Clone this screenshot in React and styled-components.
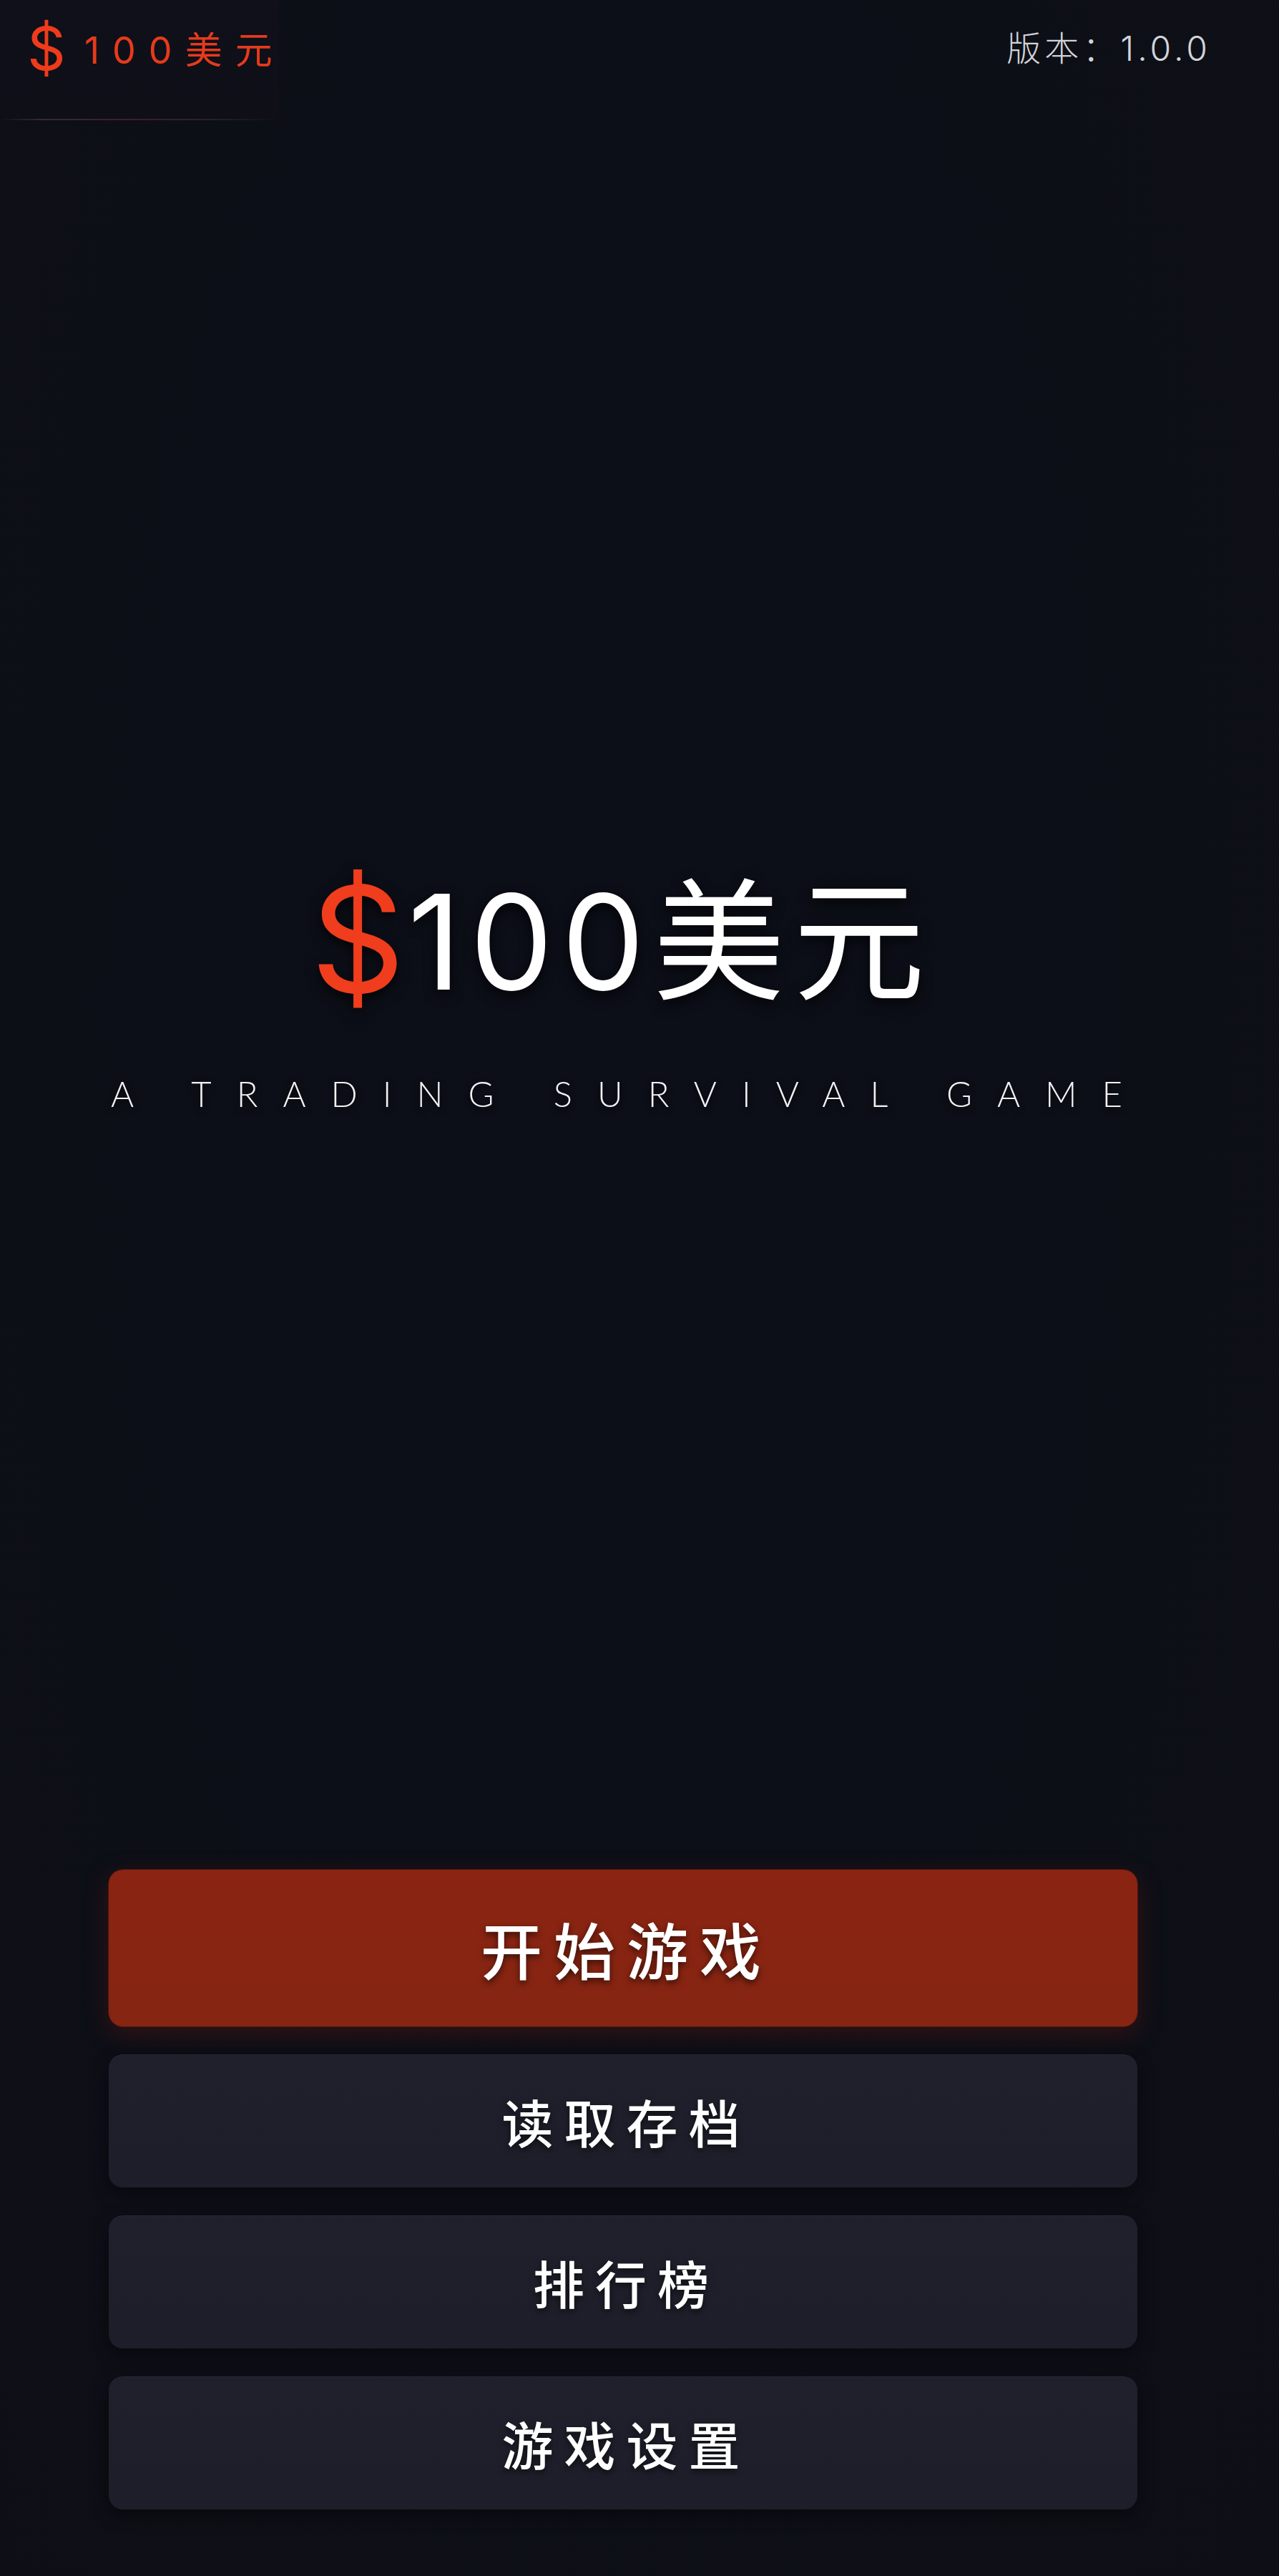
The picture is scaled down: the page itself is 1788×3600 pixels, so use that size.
import styled, { createGlobalStyle } from "styled-components";

const GlobalStyle = createGlobalStyle`
  html, body {
    margin: 0;
    padding: 0;
    background: #0d0f17;
  }
  body {
    font-family: Inter, "Noto Sans CJK SC", sans-serif;
  }
`;

const Screen = styled.div`
  width: 1788px;
  min-height: 3600px;
  display: flex;
  flex-direction: column;
  background: radial-gradient(ellipse at 48% 40%, #0c0e18 0%, #0d0f17 60%, #0e0f16 100%);
  color: #fff;
`;

// top bar
const TopBar = styled.header`
  height: 168px;
  display: flex;
  justify-content: space-between;
  align-items: flex-start;
`;

const LogoBox = styled.div`
  position: relative;
  flex-shrink: 0;
  width: 390px;
  height: 168px;
  display: flex;
  align-items: center;
  padding-left: 38px;
  padding-bottom: 26px;
  box-sizing: border-box;
  white-space: nowrap;
  background: linear-gradient(180deg, #0f1019 0%, #0e0f17 100%);

  &::after {
    content: "";
    position: absolute;
    left: 0;
    right: 0;
    bottom: 0;
    height: 2px;
    background: linear-gradient(
      90deg,
      rgba(255, 255, 255, 0) 0%,
      rgba(90, 70, 80, 0.5) 15%,
      rgba(110, 40, 60, 0.55) 45%,
      rgba(90, 70, 80, 0.35) 75%,
      rgba(255, 255, 255, 0) 100%
    );
  }
`;

const LogoDollar = styled.span`
  font-family: Inter, sans-serif;
  font-weight: 400;
  font-size: 84px;
  line-height: 1;
  color: #ee3b1b;
  margin-right: 26px;
  transform: translateY(-3px);
`;

const LogoText = styled.span`
  font-family: Inter, "Noto Sans CJK SC", sans-serif;
  font-size: 52px;
  font-weight: 400;
  letter-spacing: 18px;
  color: #e63a1c;
  line-height: 1;
`;

const Version = styled.div`
  margin: 44px 95px 0 0;
  font-family: Inter, "Noto Sans CJK SC", sans-serif;
  font-weight: 300;
  font-size: 48px;
  letter-spacing: 5px;
  color: #d2d3d8;
  line-height: 1;
  white-space: nowrap;
`;

// title block
const Hero = styled.main`
  flex: 1;
  display: flex;
  flex-direction: column;
  align-items: center;
  justify-content: center;
  padding: 0 200px 16px 151px;
`;

const Title = styled.h1`
  margin: 0;
  display: flex;
  align-items: center;
  font-family: Inter, "Noto Sans CJK SC", sans-serif;
  font-weight: 400;
  font-size: 184px;
  line-height: 1;
  letter-spacing: 12px;
  color: #ffffff;
  white-space: nowrap;
  text-shadow: 0 6px 18px rgba(0, 0, 0, 0.75);
`;

const TitleDollar = styled.span`
  font-size: 206px;
  font-weight: 400;
  color: #ef3d1d;
  letter-spacing: 4px;
  transform: translateY(-4px);
`;

const Tagline = styled.p`
  margin: 85px 0 0;
  font-family: Lato, "Open Sans", sans-serif;
  font-weight: 300;
  font-size: 49px;
  letter-spacing: 35px;
  padding-left: 20px;
  color: #f2f2f4;
  line-height: 1;
  white-space: nowrap;
  text-shadow: 0 3px 8px rgba(0, 0, 0, 0.7);
`;

// menu
const Menu = styled.nav`
  display: flex;
  flex-direction: column;
  gap: 39px;
  padding: 0 198px 93px 152px;
`;

const MenuButton = styled.button`
  height: ${(p) => (p.$primary ? "219px" : "186px")};
  border: none;
  border-radius: 20px;
  background: ${(p) =>
    p.$primary
      ? "linear-gradient(180deg, #8b2412 0%, #852512 100%)"
      : "linear-gradient(180deg, #1f202c 0%, #1d1e29 100%)"};
  box-shadow: ${(p) =>
    p.$primary
      ? "0 10px 34px rgba(120, 25, 15, 0.35), 0 0 0 1px rgba(150, 40, 20, 0.35)"
      : "0 8px 24px rgba(0, 0, 0, 0.45), inset 0 1px 0 rgba(255, 255, 255, 0.03)"};
  color: #ffffff;
  font-family: "Noto Sans CJK SC", sans-serif;
  font-weight: 500;
  font-size: ${(p) => (p.$primary ? "86px" : "72px")};
  letter-spacing: ${(p) => (p.$primary ? "16px" : "15px")};
  padding-left: ${(p) => (p.$primary ? "16px" : "15px")};
  line-height: 1;
  text-shadow: 0 4px 10px rgba(0, 0, 0, 0.6);
  cursor: pointer;
`;

const menuItems = [
  { label: "开始游戏", primary: true },
  { label: "读取存档" },
  { label: "排行榜" },
  { label: "游戏设置" },
];

export default function App() {
  return (
    <>
      <GlobalStyle />
      <Screen>
        <TopBar>
          <LogoBox>
            <LogoDollar>$</LogoDollar>
            <LogoText>100美元</LogoText>
          </LogoBox>
          <Version>版本：1.0.0</Version>
        </TopBar>

        <Hero>
          <Title>
            <TitleDollar>$</TitleDollar>
            100美元
          </Title>
          <Tagline>A TRADING SURVIVAL GAME</Tagline>
        </Hero>

        <Menu>
          {menuItems.map((item) => (
            <MenuButton key={item.label} $primary={item.primary}>
              {item.label}
            </MenuButton>
          ))}
        </Menu>
      </Screen>
    </>
  );
}
